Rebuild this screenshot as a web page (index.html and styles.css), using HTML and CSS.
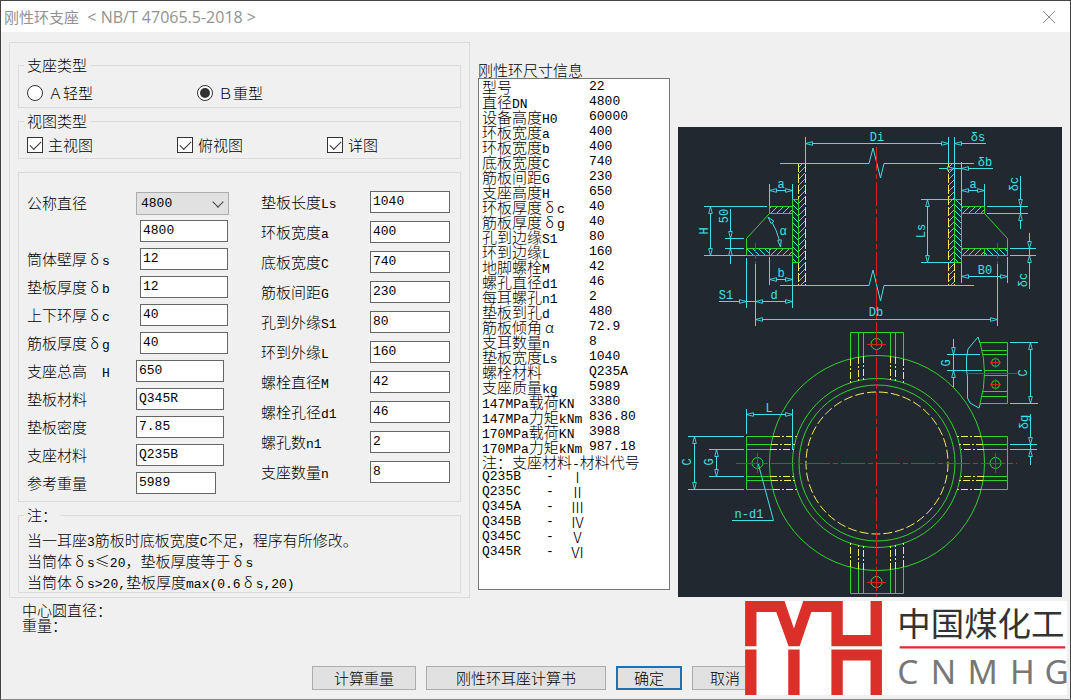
FILE: index.html
```html
<!DOCTYPE html>
<html lang="zh-CN">
<head>
	<meta charset="utf-8">
	<title>刚性环支座</title>
	<link rel="stylesheet" href="styles.css">
</head>

<body>
	<div class="window">
		<header class="titlebar">
			<h1>刚性环支座<span class="std">&nbsp; &lt; NB/T 47065.5-2018 &gt;</span></h1>
			<button class="close" type="button" aria-label="关闭">
				<svg width="14" height="14" viewBox="0 0 14 14"><path d="M1 1L13 13M13 1L1 13" fill="none" stroke="#8a8a8a"/></svg>
			</button>
		</header>

		<form>
			<main class="content">
				<section class="panel">
					<fieldset class="type">
						<legend>支座类型</legend>
						<div class="radios">
							<label><input type="radio" name="type">Ａ轻型</label>
							<label><input type="radio" name="type" checked>Ｂ重型</label>
						</div>
					</fieldset>

					<fieldset class="views">
						<legend>视图类型</legend>
						<div class="checks">
							<label><input type="checkbox" checked>主视图</label>
							<label><input type="checkbox" checked>俯视图</label>
							<label><input type="checkbox" checked>详图</label>
						</div>
					</fieldset>

					<div class="params">
						<div class="col col-left">
							<div class="field"><label for="dn">公称直径</label><span class="select"><select id="dn"><option>4800</option></select></span></div>
							<div class="field indent"><span></span><input type="text" aria-label="公称直径" value="4800"></div>
							<div class="field indent"><label for="ts">筒体壁厚<span class="full">δ</span><span class="en">s</span></label><input type="text" id="ts" value="12"></div>
							<div class="field indent"><label for="tb">垫板厚度<span class="full">δ</span><span class="en">b</span></label><input type="text" id="tb" value="12"></div>
							<div class="field indent"><label for="tc">上下环厚<span class="full">δ</span><span class="en">c</span></label><input type="text" id="tc" value="40"></div>
							<div class="field indent"><label for="tg">筋板厚度<span class="full">δ</span><span class="en">g</span></label><input type="text" id="tg" value="40"></div>
							<div class="field"><label for="h">支座总高<span class="full"></span><span class="en">H</span></label><input type="text" id="h" value="650"></div>
							<div class="field"><label for="padmat">垫板材料</label><input type="text" id="padmat" value="Q345R"></div>
							<div class="field"><label for="dens">垫板密度</label><input type="text" id="dens" value="7.85"></div>
							<div class="field"><label for="mat">支座材料</label><input type="text" id="mat" value="Q235B"></div>
							<div class="field"><label for="wt">参考重量</label><input class="short" type="text" id="wt" value="5989"></div>
						</div>
						<div class="col col-right">
							<div class="field"><label for="ls">垫板长度<span class="en">Ls</span></label><input type="text" id="ls" value="1040"></div>
							<div class="field"><label for="a">环板宽度<span class="en">a</span></label><input type="text" id="a" value="400"></div>
							<div class="field"><label for="c">底板宽度<span class="en">C</span></label><input type="text" id="c" value="740"></div>
							<div class="field"><label for="g">筋板间距<span class="en">G</span></label><input type="text" id="g" value="230"></div>
							<div class="field"><label for="s1">孔到外缘<span class="en">S1</span></label><input type="text" id="s1" value="80"></div>
							<div class="field"><label for="l">环到外缘<span class="en">L</span></label><input type="text" id="l" value="160"></div>
							<div class="field"><label for="m">螺栓直径<span class="en">M</span></label><input type="text" id="m" value="42"></div>
							<div class="field"><label for="d1">螺栓孔径<span class="en">d1</span></label><input type="text" id="d1" value="46"></div>
							<div class="field"><label for="n1">螺孔数<span class="en">n1</span></label><input type="text" id="n1" value="2"></div>
							<div class="field"><label for="n">支座数量<span class="en">n</span></label><input type="text" id="n" value="8"></div>
						</div>
					</div>

					<fieldset class="notes">
						<legend>注：</legend>
						<p>当一耳座<span class="en">3</span>筋板时底板宽度<span class="en">C</span>不足，程序有所修改。</p>
						<p>当筒体<span class="full">δ</span><span class="en">s</span>≤<span class="en">20</span>，垫板厚度等于<span class="full">δ</span><span class="en">s</span></p>
						<p>当筒体<span class="full">δ</span><span class="en">s&gt;20,</span>垫板厚度<span class="en">max(0.6</span><span class="full">δ</span><span class="en">s,20)</span></p>
					</fieldset>
				</section>

				<section class="info">
					<h2>刚性环尺寸信息</h2>
					<div class="listbox">
						<table class="sizes">
							<tr><td>型号</td><td class="en">22</td></tr>
							<tr><td>直径<span class="en">DN</span></td><td class="en">4800</td></tr>
							<tr><td>设备高度<span class="en">H0</span></td><td class="en">60000</td></tr>
							<tr><td>环板宽度<span class="en">a</span></td><td class="en">400</td></tr>
							<tr><td>环板宽度<span class="en">b</span></td><td class="en">400</td></tr>
							<tr><td>底板宽度<span class="en">C</span></td><td class="en">740</td></tr>
							<tr><td>筋板间距<span class="en">G</span></td><td class="en">230</td></tr>
							<tr><td>支座高度<span class="en">H</span></td><td class="en">650</td></tr>
							<tr><td>环板厚度<span class="full">δ</span><span class="en">c</span></td><td class="en">40</td></tr>
							<tr><td>筋板厚度<span class="full">δ</span><span class="en">g</span></td><td class="en">40</td></tr>
							<tr><td>孔到边缘<span class="en">S1</span></td><td class="en">80</td></tr>
							<tr><td>环到边缘<span class="en">L</span></td><td class="en">160</td></tr>
							<tr><td>地脚螺栓<span class="en">M</span></td><td class="en">42</td></tr>
							<tr><td>螺孔直径<span class="en">d1</span></td><td class="en">46</td></tr>
							<tr><td>每耳螺孔<span class="en">n1</span></td><td class="en">2</td></tr>
							<tr><td>垫板到孔<span class="en">d</span></td><td class="en">480</td></tr>
							<tr><td>筋板倾角<span class="full">α</span></td><td class="en">72.9</td></tr>
							<tr><td>支耳数量<span class="en">n</span></td><td class="en">8</td></tr>
							<tr><td>垫板宽度<span class="en">Ls</span></td><td class="en">1040</td></tr>
							<tr><td>螺栓材料</td><td class="en">Q235A</td></tr>
							<tr><td>支座质量<span class="en">kg</span></td><td class="en">5989</td></tr>
							<tr><td><span class="en">147MPa</span>载荷<span class="en">KN</span></td><td class="en">3380</td></tr>
							<tr><td><span class="en">147MPa</span>力矩<span class="en">kNm</span></td><td class="en">836.80</td></tr>
							<tr><td><span class="en">170MPa</span>载荷<span class="en">KN</span></td><td class="en">3988</td></tr>
							<tr><td><span class="en">170MPa</span>力矩<span class="en">kNm</span></td><td class="en">987.18</td></tr>
						</table>
						<table class="codes">
							<colgroup><col class="code"><col class="dash"><col></colgroup>
							<tr><td colspan="3">注：支座材料<span class="en">-</span>材料代号</td></tr>
							<tr><td class="en">Q235B</td><td class="en">-</td><td>Ⅰ</td></tr>
							<tr><td class="en">Q235C</td><td class="en">-</td><td>Ⅱ</td></tr>
							<tr><td class="en">Q345A</td><td class="en">-</td><td>Ⅲ</td></tr>
							<tr><td class="en">Q345B</td><td class="en">-</td><td>Ⅳ</td></tr>
							<tr><td class="en">Q345C</td><td class="en">-</td><td>Ⅴ</td></tr>
							<tr><td class="en">Q345R</td><td class="en">-</td><td>Ⅵ</td></tr>
						</table>
					</div>
				</section>

				<svg class="drawing" viewBox="678 127 384 470">
					<defs>
						<marker id="arr" markerWidth="8" markerHeight="5" refX="8" refY="2.5" orient="auto-start-reverse" markerUnits="userSpaceOnUse">
							<path d="M8 2.5L1 .7V4.3Z" fill="#22282f" stroke="#3fe0e6" stroke-width=".9"/>
						</marker>
						<pattern id="hatch" width="6" height="6" patternUnits="userSpaceOnUse">
							<path d="M-1 7L7 -1M-1 1L1 -1M5 7L7 5" stroke="#3fe0e6" stroke-width="1"/>
						</pattern>
						<pattern id="hatch-back" width="6" height="6" patternUnits="userSpaceOnUse">
							<path d="M-1 -1L7 7M-1 5L1 7M5 -1L7 1" stroke="#3fe0e6" stroke-width="1"/>
						</pattern>
					</defs>

					<!-- elevation: shell walls, pads, plates -->
					<g fill="url(#hatch)">
						<rect x="798.5" y="163.5" width="7" height="122"/>
						<rect x="948.5" y="163.5" width="6" height="122"/>
					</g>
					<g class="yellow" stroke-dasharray="9 2">
						<path d="M798.5 163V285M805.5 163V285M948.5 163V285M954.5 163V285"/>
					</g>
					<g class="green">
						<rect x="792.5" y="199.5" width="6" height="63" fill="url(#hatch-back)"/>
						<rect x="954.5" y="199.5" width="7" height="63" fill="url(#hatch-back)"/>
						<rect x="769.5" y="206.5" width="23" height="7" fill="url(#hatch)"/>
						<rect x="961.5" y="206.5" width="23" height="7" fill="url(#hatch)"/>
						<rect x="746.5" y="248.5" width="23" height="7" fill="url(#hatch-back)"/>
						<rect x="769.5" y="248.5" width="23" height="7" fill="url(#hatch)"/>
						<rect x="961.5" y="248.5" width="23" height="7" fill="url(#hatch)"/>
						<rect x="984.5" y="248.5" width="23" height="7" fill="url(#hatch-back)"/>
						<path d="M769.5 213.5L746.5 238.5V248.5M984.5 213.5L1007.5 238.5V248.5"/>
					</g>
					<g class="cyan">
						<path d="M780 163.5H869L873 148L880.500 178L884 163.500H974"/>
						<path d="M780 285.500H869L873 270L880.500 301L884 285.500H974"/>
					</g>

					<!-- elevation: extension lines -->
					<g class="cyan">
						<path d="M805.500 137V163M948.500 137V163M954.500 137V199M961.500 162V206M984.500 184V206"/>
						<path d="M769.500 184V206M792.500 184V199M704 206.500H767M704 255.500H746M725 238.500H744M725 248.500H744"/>
						<path d="M769.500 257V285M792.500 263V308M746.500 258V308M755.500 264V326M997.500 264V326"/>
						<path d="M921 199.500H954M921 262.500H954M987 206.500H1028M987 213.500H1028M1010 248.500H1036M1010 255.500H1036"/>
						<path d="M961.500 263V283M1007.500 257V283"/>
					</g>
					<!-- elevation: dimension lines -->
					<g class="cyan dim">
						<path class="both" d="M805.500 143.500H948.500"/>
						<path class="both" d="M769.500 190.500H792.500"/>
						<path class="both" d="M961.500 190.500H984.500"/>
						<path class="both" d="M710.500 206.500V255.500"/>
						<path class="both" d="M769.500 279.500H792.500"/>
						<path class="both" d="M755.500 301.500H792.500"/>
						<path class="both" d="M755.500 319.500H997.500"/>
						<path class="both" d="M927.500 199.500V262.500"/>
						<path class="both" d="M961.500 276.500H1007.500"/>
						<path class="both" d="M768 217Q778 229 780.500 247"/>
						<path class="end" d="M986 143.500H954.500"/>
						<path class="end" d="M939 168.500H954.500"/>
						<path class="end" d="M993 168.500H961.500"/>
						<path d="M954 168.500H962M730.500 238V256M746 301.500H756M1020.500 206V214M1029.500 248V256"/>
						<path class="end" d="M730.500 209V238.500"/>
						<path class="end" d="M730.500 264V248.500"/>
						<path class="end" d="M719 301.500H746.500"/>
						<path class="end" d="M1020.500 176V206.500"/>
						<path class="end" d="M1020.500 229V213.500"/>
						<path class="end" d="M1029.500 233V248.500"/>
						<path class="end" d="M1029.500 289V255.500"/>
					</g>

					<!-- plan view -->
					<g class="green">
						<circle cx="877" cy="463" r="107.500"/>
						<circle cx="877" cy="463" r="84.500"/>
						<circle cx="877" cy="463" r="78"/>
						<path d="M773 436.500H746.500V489.500H773M746 444.500H771M746 449.500H770M746 476.500H770M746 480.500H771"/>
						<path d="M981 436.500H1007.500V489.500H981M1008 444.500H983M1008 449.500H984M1008 476.500H984M1008 480.500H983"/>
						<path d="M850.500 359V332.500H903.500V359M858.500 332V357M863.500 332V356M890.500 332V356M895.500 332V357"/>
						<path d="M850.500 567V593.500H903.500V567M858.500 594V569M863.500 594V570M890.500 594V570M895.500 594V569"/>
						<circle cx="757.500" cy="463" r="5.500"/>
						<circle cx="995.500" cy="463" r="5.500"/>
						<circle cx="876.500" cy="344" r="5.500"/>
						<circle cx="876.500" cy="582" r="5.500"/>
					</g>
					<g class="yellow">
						<circle cx="877" cy="463" r="71" stroke-dasharray="9 3"/>
						<path stroke-dasharray="7 2 2 2" d="M773 436.500H797M771 444.500H795M770 449.500H794M770 476.500H794M771 480.500H795M773 489.500H797"/>
						<path stroke-dasharray="7 2 2 2" d="M981 436.500H957M983 444.500H959M984 449.500H961M984 476.500H961M983 480.500H959M981 489.500H957"/>
						<path stroke-dasharray="7 2 2 2" d="M850.500 359V383M858.500 357V381M863.500 356V380M890.500 356V380M895.500 357V381M903.500 359V383"/>
						<path stroke-dasharray="7 2 2 2" d="M850.500 567V543M858.500 569V545M863.500 570V546M890.500 570V546M895.500 569V545M903.500 567V543"/>
					</g>
					<g class="cyan">
						<path d="M746.500 409V434M792.500 409V450M688 436.500H744M688 489.500H744M709 449.500H744M709 476.500H744"/>
						<path d="M758 463L773.500 520.500H732"/>
						<path d="M1010 342.500H1038M1010 403.500H1038M947 354.500H980M947 370.500H982M1010 444.500H1037M1010 449.500H1037"/>
						<path d="M980 343L978 337L968 349L966.500 358V370L967.500 377V398L970 403L979 408L980.500 403"/>
					</g>
					<g class="cyan dim">
						<path class="both" d="M746.500 414.500H792.500"/>
						<path class="both" d="M694.500 436.500V489.500"/>
						<path class="both" d="M716.500 449.500V476.500"/>
						<path class="both" d="M1030.500 342.500V403.500"/>
						<path class="end" d="M953.500 339V354.500"/>
						<path class="end" d="M953.500 387V370.500"/>
						<path class="end" d="M1030.500 414V444.500"/>
						<path class="end" d="M1030.500 465V449.500"/>
						<path d="M953.500 354V371M1030.500 444V450"/>
					</g>

					<!-- double-bolt lug detail -->
					<g class="green">
						<path d="M980 342.500H1007.500V403.500H980Q989 373 980 342.500Z"/>
						<path d="M982 350.500H1007M983 354.500H1007M984 370.500H1007M984 375.500H1007M983 391.500H1007M982 396.500H1007"/>
						<circle cx="995.500" cy="362.500" r="4"/>
						<circle cx="995.500" cy="384.500" r="4"/>
					</g>

					<!-- centre lines -->
					<g class="red">
						<path stroke-dasharray="24 3 5 3" d="M876.500 147V597M736 463.500H1017"/>
						<path d="M967 373.500H1017M990 362.500H1001M995.500 357V368M990 384.500H1001M995.500 379V390"/>
						<path d="M757.500 453V473M995.500 453V473M867 344.500H886M867 582.500H886"/>
						<path stroke-dasharray="10 2 4 2" d="M755.500 243V264M997.500 243V264"/>
					</g>

					<g class="dims">
						<text x="877" y="141">Di</text>
						<text x="978" y="141">δs</text>
						<text x="985" y="166">δb</text>
						<text x="781" y="188">a</text>
						<text x="973" y="188">a</text>
						<text x="783" y="235">α</text>
						<text x="781" y="277">b</text>
						<text x="726" y="299">S1</text>
						<text x="774" y="299">d</text>
						<text x="876" y="316">Db</text>
						<text x="985" y="274">B0</text>
						<text x="769" y="412">L</text>
						<text x="749" y="518">n-d1</text>
						<text transform="translate(708 231) rotate(-90)">H</text>
						<text transform="translate(728 216) rotate(-90)">50</text>
						<text transform="translate(925 231) rotate(-90)">Ls</text>
						<text transform="translate(1018 184) rotate(-90)">δc</text>
						<text transform="translate(1027 280) rotate(-90)">δc</text>
						<text transform="translate(691 462) rotate(-90)">C</text>
						<text transform="translate(713 462) rotate(-90)">G</text>
						<text transform="translate(950 363) rotate(-90)">G</text>
						<text transform="translate(1027 373) rotate(-90)">C</text>
						<text transform="translate(1028 422) rotate(-90)">δg</text>
					</g>
				</svg>
			</main>

			<div class="status">
				<p>中心圆直径：</p>
				<p>重量：</p>
			</div>

			<div class="buttons">
				<button type="button" class="calc">计算重量</button>
				<button type="button" class="book">刚性环耳座计算书</button>
				<button type="button" class="ok">确定</button>
				<button type="button" class="cancel">取消</button>
			</div>
		</form>

		<svg class="logo" viewBox="45 33 962 281">
			<g fill="#db2f29">
				<path d="M45 33H163L191 115L219 33H337V135H420V33H454V168H303V66H243L208 168H175L138 66H79V168H45Z"/>
				<path d="M45 178H79V314H45ZM174 178H208V314H174ZM303 178H454V314H420V211H337V314H303Z"/>
				<path d="M507 168H1002V175H507Z"/>
			</g>
			<text class="logo-cn" x="500" y="138">中国煤化工</text>
			<text class="logo-en" x="500 600 710 837 940" y="280">CNMHG</text>
		</svg>
	</div>
</body>

</html>
```

FILE: styles.css
```css
* {
	box-sizing: border-box;
}

body {
	margin: 0;
	background: #f0f0f0;
	color: #000;
	font: 300 15px/16px "Noto Sans CJK SC", sans-serif;
}

h1, h2, p {
	margin: 0;
	font-size: 15px;
	font-weight: 300;
}

.window {
	position: relative;
	min-height: 100vh;
	border: 1px solid #444;
	border-bottom-color: #888;
}

.titlebar {
	display: flex;
	justify-content: space-between;
	align-items: center;
	height: 31px;
	padding: 0 14px 0 3px;
	background: #fff;
}

.titlebar h1 {
	color: #929292;
	font-weight: normal;
}

.std {
	font-family: "Open Sans", sans-serif;
	font-size: 16px;
}

.close {
	display: flex;
	padding: 0;
	border: 0;
	background: none;
}

/* Latin text is half the width of the Chinese text */
.en {
	font-family: "Liberation Mono", monospace;
	font-size: 13px;
	line-height: 0;
}

.full {
	display: inline-block;
	width: 15px;
	line-height: 0;
	text-align: center;
}

.content {
	display: grid;
	grid-template-columns: minmax(0, 461fr) minmax(0, 192fr) minmax(0, 384fr);
	gap: 8px;
	align-items: start;
	padding: 10px 8px 0;
}

.panel {
	padding: 14px 8px 4px;
	border: 1px solid #dcdcdc;
}

fieldset {
	min-width: 0;
	margin: 0;
	border: 1px solid #dcdcdc;
}

legend {
	margin-left: -3px;
	padding: 0 3px;
}

.type {
	padding: 10px 8px 4px;
}

.views {
	margin-top: 5px;
	padding: 6px 8px 3px;
}

.radios, .checks {
	display: grid;
}

.radios {
	grid-template-columns: 170fr 255fr;
}

.checks {
	grid-template-columns: 150fr 150fr 125fr;
}

.radios label, .checks label {
	display: flex;
	align-items: center;
	gap: 5px;
	height: 20px;
}

input[type="radio"], input[type="checkbox"] {
	display: grid;
	place-items: center;
	appearance: none;
	width: 16px;
	height: 16px;
	margin: 0;
	border: 1px solid #333;
	background: #fff;
}

input[type="radio"] {
	border-radius: 50%;
}

input[type="radio"]:checked::before {
	content: "";
	width: 10px;
	height: 10px;
	border-radius: 50%;
	background: #333;
}

input[type="checkbox"]:checked::before {
	content: "";
	width: 10px;
	height: 5px;
	margin-bottom: 3px;
	border: solid #333;
	border-width: 0 0 1px 1px;
	transform: rotate(-45deg);
}

.params {
	display: grid;
	grid-template-columns: 234fr 191fr;
	margin-top: 13px;
	padding: 14px 8px 4px;
	border: 1px solid #dcdcdc;
}

.field {
	display: grid;
	grid-template-columns: 109px 1fr;
	align-items: center;
}

.col-left {
	padding-top: 2px;
}

.col-left .field {
	height: 28px;
}

.col-right .field {
	height: 30px;
}

.indent {
	grid-template-columns: 113px 1fr;
}

input[type="text"] {
	width: 88px;
	height: 22px;
	padding: 0 2px 2px;
	border: 1px solid #666;
	background: #fff;
	font: 13px "Liberation Mono", monospace;
}

.col-right input[type="text"], input.short {
	width: 80px;
}

.select {
	position: relative;
	width: 93px;
}

.select::after {
	content: "";
	position: absolute;
	top: 6px;
	right: 7px;
	width: 7px;
	height: 7px;
	border: solid #444;
	border-width: 0 1px 1px 0;
	transform: rotate(45deg);
	pointer-events: none;
}

select {
	display: block;
	appearance: none;
	width: 100%;
	height: 23px;
	padding: 0 4px;
	border: 1px solid #adadad;
	border-radius: 0;
	background: #e1e1e1;
	color: #000;
	font: 13px "Liberation Mono", monospace;
}

.notes {
	margin-top: 5px;
	padding: 6px 8px 0;
}

.notes p {
	line-height: 21px;
	white-space: nowrap;
}

.info {
	padding-top: 20px;
}

.listbox {
	min-height: 512px;
	border: 1px solid #777;
	background: #fff;
}

.listbox table {
	width: 100%;
	border-collapse: collapse;
	table-layout: fixed;
}

.listbox td {
	height: 15px;
	padding: 0 0 0 3px;
	line-height: 15px;
	white-space: nowrap;
}

.sizes td:first-child {
	width: 107px;
}

.code {
	width: 64px;
}

.dash {
	width: 24px;
}

.drawing {
	display: block;
	width: 100%;
	margin-top: 85px;
	background: #22282f;
}

.cyan, .green, .yellow, .red {
	fill: none;
}

.cyan {
	stroke: #3fe0e6;
}

.green {
	stroke: #2fd32f;
}

.yellow {
	stroke: #f2ee5a;
}

.red {
	stroke: #d8201f;
}

.dim .both {
	marker-start: url(#arr);
	marker-end: url(#arr);
}

.dim .end {
	marker-end: url(#arr);
}

.dims {
	fill: #3fe0e6;
	font: 12px "Liberation Mono", monospace;
	text-anchor: middle;
}

.status {
	margin-top: 4px;
	padding-left: 21px;
}

.status p {
	line-height: 15px;
}

.buttons {
	display: flex;
	gap: 10px;
	margin-top: 34px;
	padding-left: 311px;
}

.buttons button {
	height: 24px;
	padding: 0;
	border: 1px solid #adadad;
	background: #e1e1e1;
	color: #000;
	font: 300 15px/16px "Noto Sans CJK SC", sans-serif;
}

.calc {
	width: 104px;
}

.book {
	width: 180px;
}

.ok, .cancel {
	width: 66px;
}

.buttons .ok {
	border: 2px solid #1a73b8;
}

/* company mark lies over the lower right corner */
.logo {
	position: absolute;
	right: 3px;
	bottom: 4px;
	width: 322px;
	height: 94px;
	background: #fff;
}

.logo-cn {
	fill: #333;
	font: 100px "Noto Sans CJK SC", sans-serif;
}

.logo-en {
	fill: #777;
	font: 100px "Noto Sans", sans-serif;
}
```
